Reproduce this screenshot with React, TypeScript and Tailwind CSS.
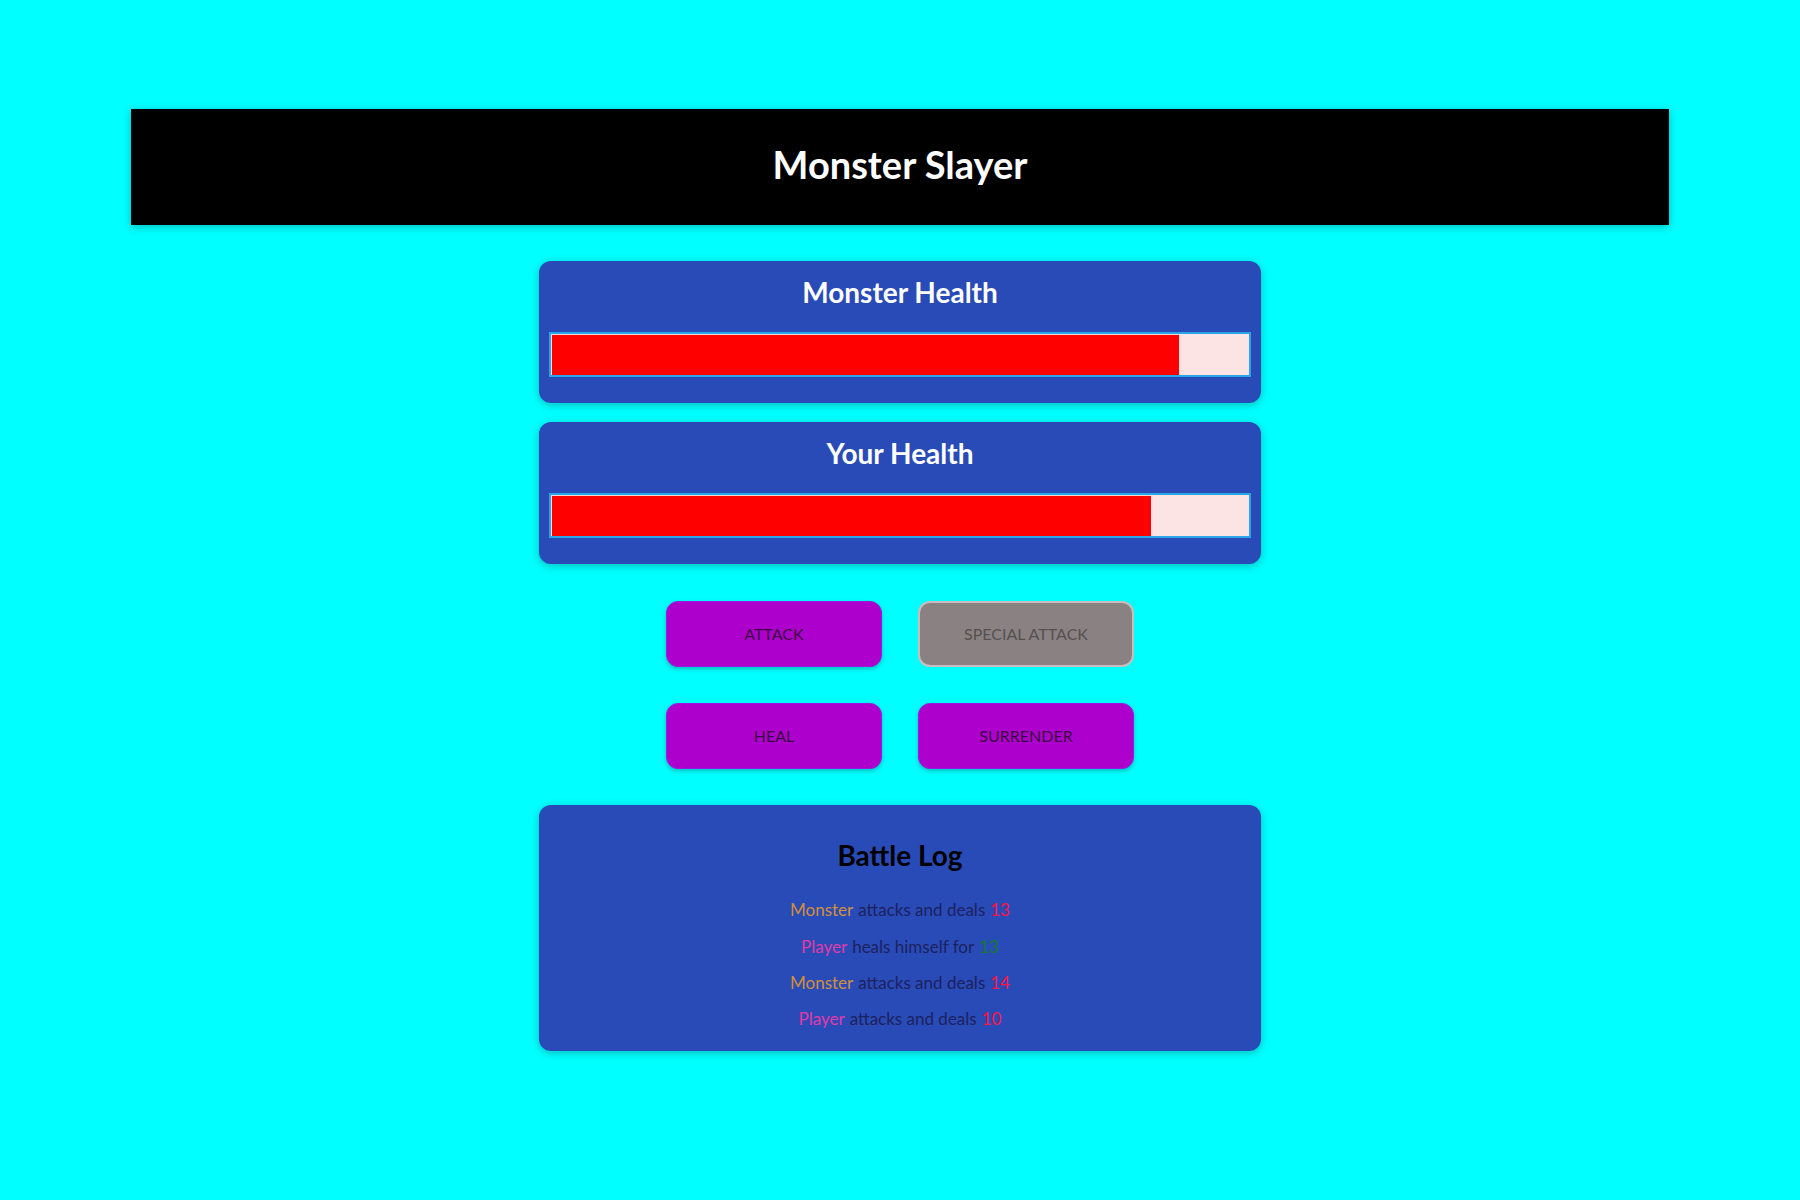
import React from 'react';

type LogEntry = {
    by: 'Monster' | 'Player';
    action: string;
    value: number;
    kind: 'damage' | 'heal';
};

const log: LogEntry[] = [
    { by: 'Monster', action: 'attacks and deals', value: 13, kind: 'damage' },
    { by: 'Player', action: 'heals himself for', value: 13, kind: 'heal' },
    { by: 'Monster', action: 'attacks and deals', value: 14, kind: 'damage' },
    { by: 'Player', action: 'attacks and deals', value: 10, kind: 'damage' },
];

const HealthCard: React.FC<{ title: string; health: number }> = ({ title, health }) => (
    <section className="w-[722px] mx-auto rounded-xl bg-[#294bb7] px-[10px] pt-[9px] pb-[26px] shadow-[0_2px_8px_rgba(0,0,0,0.26)]">
        <h2 className="h-[44px] flex items-center justify-center text-white text-[28px] font-bold">{title}</h2>
        <div className="mt-[18px] h-[45px] bg-[#fde4e4] border-2 border-[#2aa5e8]">
            <div className="h-full bg-[#ff0000] border-l border-t border-[#f3d6d6]" style={{ width: `${health}%` }} />
        </div>
    </section>
);

const App: React.FC = () => {
    return (
        <div className="min-h-screen bg-[#00ffff] pt-[109px] pb-[149px] font-['Lato','Noto_Sans',sans-serif]">
            {/* Header */}
            <header className="mx-[131px] h-[116px] pb-[5px] bg-black flex items-center justify-center shadow-[0_2px_8px_rgba(0,0,0,0.26)]">
                <h1 className="text-white text-[38px] font-bold">Monster Slayer</h1>
            </header>

            <div className="mt-[36px] flex flex-col gap-[19px]">
                <HealthCard title="Monster Health" health={90} />
                <HealthCard title="Your Health" health={86} />
            </div>

            {/* Controls */}
            <div className="mt-[37px] w-[468px] mx-auto grid grid-cols-2 gap-x-[36px] gap-y-[36px]">
                <button className="h-[66px] rounded-xl bg-[#ad00cc] border border-[#9a1ae0] text-[#3b0742] text-[16px] uppercase shadow-[0_2px_4px_rgba(0,0,0,0.26)]">
                    Attack
                </button>
                <button disabled className="h-[66px] rounded-xl bg-[#8a8282] border-2 border-[#cbbcbc] text-[#555050] text-[16px] uppercase">
                    Special Attack
                </button>
                <button className="h-[66px] rounded-xl bg-[#ad00cc] border border-[#9a1ae0] text-[#3b0742] text-[16px] uppercase shadow-[0_2px_4px_rgba(0,0,0,0.26)]">
                    Heal
                </button>
                <button className="h-[66px] rounded-xl bg-[#ad00cc] border border-[#9a1ae0] text-[#3b0742] text-[16px] uppercase shadow-[0_2px_4px_rgba(0,0,0,0.26)]">
                    Surrender
                </button>
            </div>

            {/* Battle log */}
            <section className="mt-[36px] w-[722px] mx-auto h-[246px] rounded-xl bg-[#294bb7] pt-[32px] shadow-[0_2px_8px_rgba(0,0,0,0.26)]">
                <h2 className="h-[36px] flex items-center justify-center text-black text-[28px] font-bold">Battle Log</h2>
                <ul className="mt-[19px] flex flex-col items-center">
                    {log.map((entry, i) => (
                        <li key={i} className="h-[36.3px] flex items-center text-[17px] text-[#1c2160]">
                            <span className={entry.by === 'Monster' ? 'text-[#cf8f3c]' : 'text-[#e03aa8]'}>{entry.by}</span>
                            <span className="ml-[5px]">{entry.action}</span>
                            <span className={`ml-[5px] ${entry.kind === 'heal' ? 'text-[#147a2c]' : 'text-[#ff1447]'}`}>{entry.value}</span>
                        </li>
                    ))}
                </ul>
            </section>
        </div>
    );
};

export default App;
